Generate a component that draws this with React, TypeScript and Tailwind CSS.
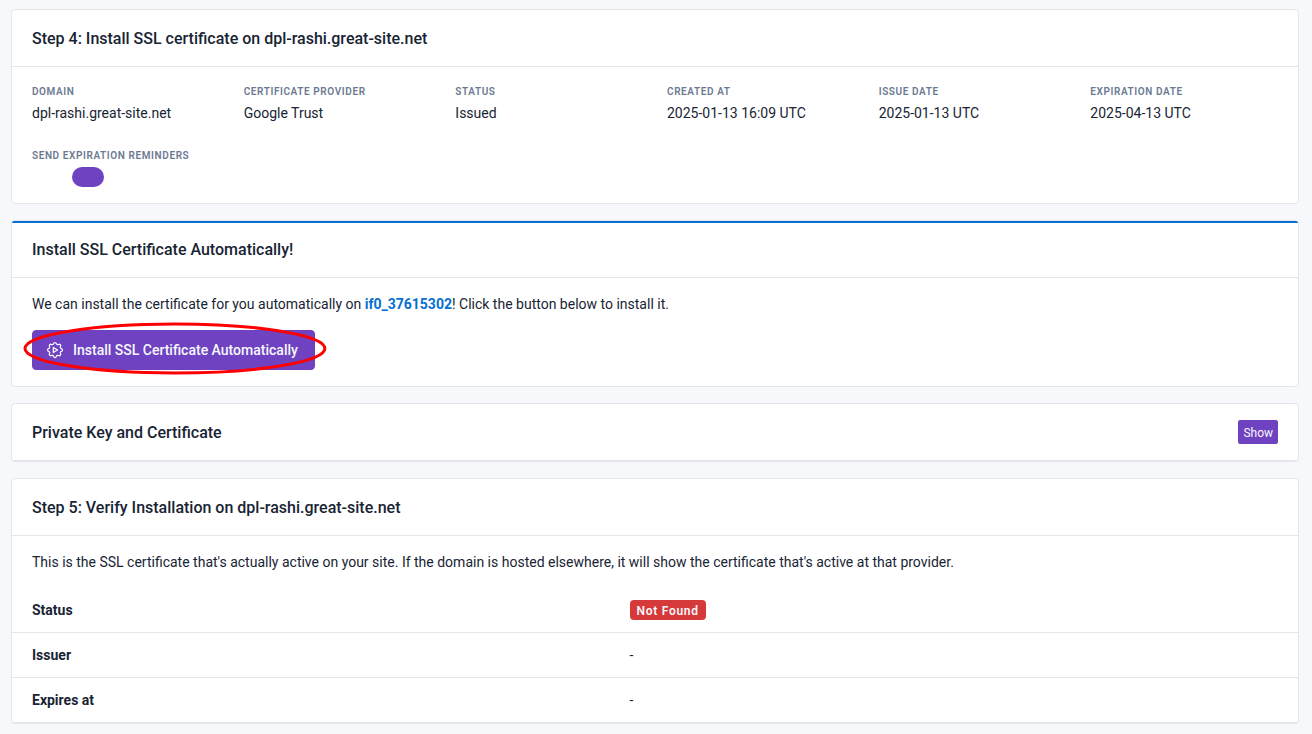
import type { ReactNode } from 'react';

const certificate = [
  { label: 'Domain', value: 'dpl-rashi.great-site.net' },
  { label: 'Certificate Provider', value: 'Google Trust' },
  { label: 'Status', value: 'Issued' },
  { label: 'Created At', value: '2025-01-13 16:09 UTC' },
  { label: 'Issue Date', value: '2025-01-13 UTC' },
  { label: 'Expiration Date', value: '2025-04-13 UTC' },
];

const fieldTitle = 'mb-0.5 block text-[10px] leading-[18px] font-semibold tracking-[0.06em] uppercase text-[#6c7a91]';

function Card({ children }: { children: ReactNode }) {
  return (
    <section className="relative rounded border border-[#e4e6ea] bg-white">
      {children}
    </section>
  );
}

function CardHeader({ title, children }: { title: string; children?: ReactNode }) {
  return (
    <div className="flex items-center justify-between border-b border-[#e4e6ea] px-5 py-[15px]">
      <h3 className="pt-0.5 text-base leading-6 font-medium">{title}</h3>
      {children}
    </div>
  );
}

function AutomationIcon() {
  return (
    <svg
      className="mr-2 -ml-1 size-5"
      viewBox="0 0 24 24"
      fill="none"
      stroke="currentColor"
      strokeWidth="1.5"
      strokeLinecap="round"
      strokeLinejoin="round"
      aria-hidden="true"
    >
      <path d="M10.325 4.317c.426 -1.756 2.924 -1.756 3.35 0a1.724 1.724 0 0 0 2.573 1.066c1.543 -.94 3.31 .826 2.37 2.37a1.724 1.724 0 0 0 1.065 2.572c1.756 .426 1.756 2.924 0 3.35a1.724 1.724 0 0 0 -1.066 2.573c.94 1.543 -.826 3.31 -2.37 2.37a1.724 1.724 0 0 0 -2.572 1.065c-.426 1.756 -2.924 1.756 -3.35 0a1.724 1.724 0 0 0 -2.573 -1.066c-1.543 .94 -3.31 -.826 -2.37 -2.37a1.724 1.724 0 0 0 -1.065 -2.572c-1.756 -.426 -1.756 -2.924 0 -3.35a1.724 1.724 0 0 0 1.066 -2.573c-.94 -1.543 .826 -3.31 2.37 -2.37c1 .608 2.296 .07 2.572 -1.065z" />
      <path d="M10 9v6l5 -3l-5 -3z" />
    </svg>
  );
}

export default function App() {
  return (
    <main className="flex min-h-screen flex-col gap-4 bg-[#f6f8fb] pt-[9px] pr-[13px] pb-2 pl-[11px] font-['Roboto',sans-serif] text-sm leading-5 text-[#182433]">
      <Card>
        <CardHeader title="Step 4: Install SSL certificate on dpl-rashi.great-site.net" />
        <div className="grid grid-cols-6 gap-6 px-5 py-4">
          {certificate.map((item) => (
            <div key={item.label}>
              <div className={fieldTitle}>{item.label}</div>
              <div>{item.value}</div>
            </div>
          ))}
          <div>
            <label htmlFor="reminders" className={fieldTitle}>
              Send Expiration Reminders
            </label>
            <input
              id="reminders"
              type="checkbox"
              defaultChecked
              className="ml-10 block h-5 w-8 appearance-none rounded-full bg-[#6f42c1]"
            />
          </div>
        </div>
      </Card>

      <Card>
        <div className="absolute inset-x-0 top-0 h-0.5 rounded-t-sm bg-[#066fd1]" />
        <CardHeader title="Install SSL Certificate Automatically!" />
        <div className="flex flex-col items-start gap-4 px-5 py-4">
          <p>
            We can install the certificate for you automatically on{' '}
            <a href="#account" className="font-bold text-[#066fd1]">
              if0_37615302
            </a>
            ! Click the button below to install it.
          </p>
          <div className="relative">
            <button
              type="button"
              className="flex h-10 items-center rounded border border-[#6f42c1] bg-[#6f42c1] px-4 font-medium text-[#f6f8fb]"
            >
              <AutomationIcon />
              Install SSL Certificate Automatically
            </button>
            <svg
              className="pointer-events-none absolute -inset-x-3 -inset-y-2 h-14 w-[calc(100%+24px)]"
              viewBox="0 0 307 56"
              preserveAspectRatio="none"
              fill="none"
              aria-hidden="true"
            >
              <ellipse cx="155" cy="26.5" rx="150" ry="24.5" stroke="#ff0000" strokeWidth="3" />
            </svg>
          </div>
        </div>
      </Card>

      <Card>
        <CardHeader title="Private Key and Certificate">
          <button
            type="button"
            className="flex h-6 items-center rounded-xs border border-[#6f42c1] bg-[#6f42c1] px-1 pt-0.5 text-xs text-[#f6f8fb]"
          >
            Show
          </button>
        </CardHeader>
      </Card>

      <Card>
        <CardHeader title="Step 5: Verify Installation on dpl-rashi.great-site.net" />
        <p className="px-5 py-4">
          This is the SSL certificate that's actually active on your site. If the domain is hosted elsewhere, it will
          show the certificate that's active at that provider.
        </p>
        <table className="w-full table-fixed border-separate border-spacing-0 text-left [&_td]:border-b [&_td]:border-[#e4e6ea] [&_th]:border-b [&_th]:border-[#e4e6ea]">
          <tbody>
            <tr className="h-[45px]">
              <th scope="row" className="w-[47.4%] pl-5 font-bold">
                Status
              </th>
              <td className="px-2">
                <span className="flex h-5 w-fit items-center rounded bg-[#d63939] px-[7px] pt-0.5 text-xs font-semibold tracking-[0.06em] text-[#f6f8fb]">
                  Not Found
                </span>
              </td>
            </tr>
            <tr className="h-[45px]">
              <th scope="row" className="pl-5 font-bold">
                Issuer
              </th>
              <td className="px-2">-</td>
            </tr>
            <tr className="h-[45px]">
              <th scope="row" className="pl-5 font-bold">
                Expires at
              </th>
              <td className="px-2">-</td>
            </tr>
          </tbody>
        </table>
      </Card>
    </main>
  );
}
